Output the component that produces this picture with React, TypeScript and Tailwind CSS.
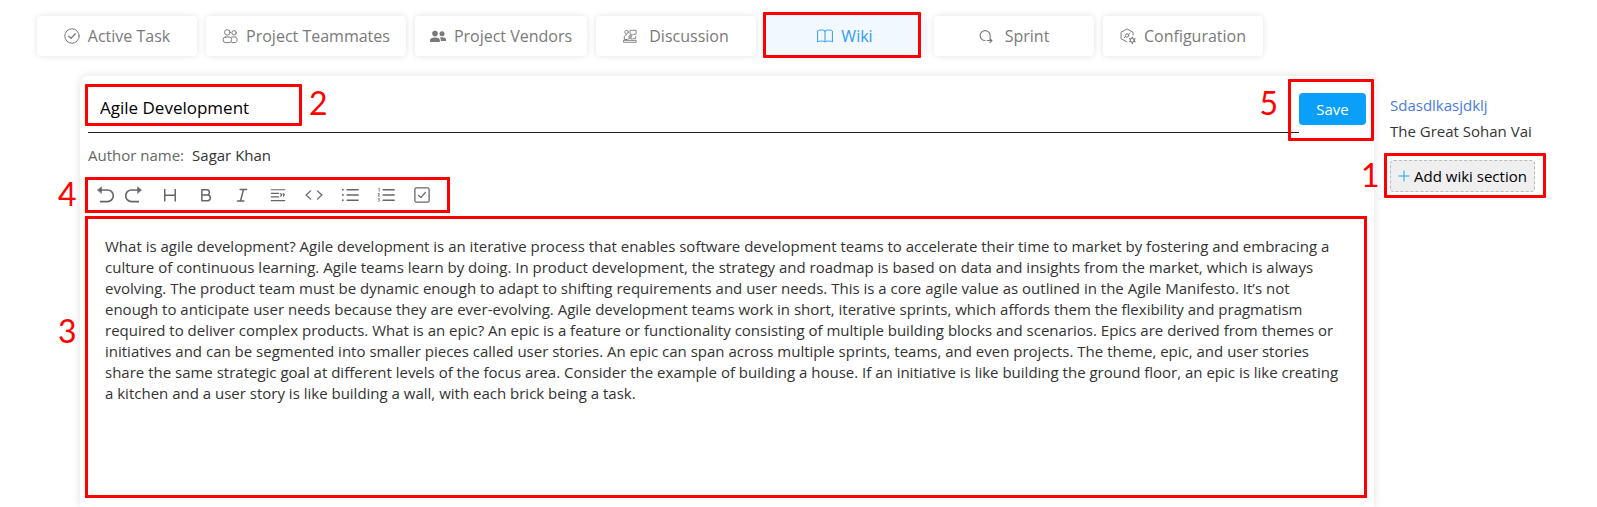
import { ReactNode } from "react"

const tabs = [
    { name: "Active Task", width: "w-40", icon: <CheckCircleIcon /> },
    { name: "Project Teammates", width: "w-50", icon: <TeamIcon /> },
    { name: "Project Vendors", width: "w-[172px]", icon: <VendorsIcon /> },
    { name: "Discussion", width: "w-40", icon: <DiscussionIcon /> },
    { name: "Wiki", width: "w-40", icon: <BookIcon />, active: true },
    { name: "Sprint", width: "w-40", icon: <SprintIcon /> },
    { name: "Configuration", width: "w-40", icon: <ConfigIcon /> },
]

const content = [
    "What is agile development? Agile development is an iterative process that enables software development teams to accelerate their time to market by fostering and embracing a",
    "culture of continuous learning. Agile teams learn by doing. In product development, the strategy and roadmap is based on data and insights from the market, which is always",
    "evolving. The product team must be dynamic enough to adapt to shifting requirements and user needs. This is a core agile value as outlined in the Agile Manifesto. It’s not",
    "enough to anticipate user needs because they are ever-evolving. Agile development teams work in short, iterative sprints, which affords them the flexibility and pragmatism",
    "required to deliver complex products. What is an epic? An epic is a feature or functionality consisting of multiple building blocks and scenarios. Epics are derived from themes or",
    "initiatives and can be segmented into smaller pieces called user stories. An epic can span across multiple sprints, teams, and even projects. The theme, epic, and user stories",
    "share the same strategic goal at different levels of the focus area. Consider the example of building a house. If an initiative is like building the ground floor, an epic is like creating",
    "a kitchen and a user story is like building a wall, with each brick being a task.",
].join("\n")

function Icon({ children, size = "size-4", box = "0 0 16 16" }: { children: ReactNode; size?: string; box?: string }) {
    return (
        <svg className={`${size} shrink-0`} viewBox={box} fill="none" stroke="currentColor" strokeLinecap="round" strokeLinejoin="round" aria-hidden="true">
            {children}
        </svg>
    )
}

function CheckCircleIcon() {
    return (
        <Icon>
            <circle cx="8" cy="8" r="7.2" />
            <path d="M4.8 8.2l2.3 2.2 4.2-4.6" strokeWidth="1.3" />
        </Icon>
    )
}

function TeamIcon() {
    return (
        <Icon>
            <circle cx="5.3" cy="4.4" r="2.8" />
            <circle cx="12" cy="4.8" r="2.2" />
            <rect x="1.2" y="9" width="8.4" height="5.6" rx="2.4" />
            <path d="M9.8 9h3c1.4 0 2.2 1 2.2 2.2v1.2c0 1.2-.8 2.2-2 2.2H10" />
        </Icon>
    )
}

function VendorsIcon() {
    return (
        <Icon>
            <g fill="currentColor" stroke="none">
                <circle cx="5" cy="5.6" r="2.8" />
                <circle cx="12" cy="5.8" r="2.5" />
                <path d="M0 14v-1.800C0 10.200 1.600 9.400 5 9.400s4.800.8 4.800 2.800V14z" />
                <path d="M10.800 13v-1.200c0-.9-.4-1.700-1-2.300.7-.2 1.400-.3 2.200-.3 2.700 0 4 .8 4 2.400V13z" />
            </g>
        </Icon>
    )
}

function DiscussionIcon() {
    return (
        <Icon size="mr-1 size-3.5">
            <circle cx="4" cy="3.500" r="2" />
            <path d="M8.500 1.500H15v4.500h-3.500L10 7.500V6H8.500z" />
            <path d="M1.500 9.500c0-2 1-3 2.500-3M8 7.500v0M14.500 8.500v2.500h-3M1.500 9.500V12h3" />
            <circle cx="8" cy="9" r="1.400" />
            <path d="M5.500 13c0-1.600 1-2.500 2.500-2.500s2.500.9 2.500 2.500M1 13h14v2.200H1z" />
        </Icon>
    )
}

function BookIcon() {
    return (
        <Icon>
            <path d="M8 3v11M8 3.200C7.500 2.300 6.300 2 4.500 2S1.200 2.300.6 3v11c1-.7 2-.9 3.900-.9s3 .2 3.500.9c.5-.7 1.600-.9 3.500-.9s2.900.2 3.900.9V3c-.6-.7-2.100-1-3.900-1S8.500 2.300 8 3.200z" />
        </Icon>
    )
}

function SprintIcon() {
    return (
        <Icon size="mr-1 size-3.5">
            <path d="M7 13.200A5.700 5.700 0 1 1 12.700 7.500v5.700M9.500 13.200h5M12.500 11l2.300 2.200-2.300 2.200" strokeWidth="1.300" />
        </Icon>
    )
}

function ConfigIcon() {
    return (
        <Icon>
            <path d="M6.800 13.800L1 10.800V4.300L7 .9l6 3.400v2.500M4.300 9.800l1-1.200M8.800 6.200l1-1.200" />
            <circle cx="7" cy="7.500" r="1.700" />
            <circle cx="12.300" cy="12.300" r="2" />
            <path d="M12.300 9.200v1M12.300 14.400v1M9.600 10.800l.9.500M14.100 13.300l.9.500M9.600 13.800l.9-.5M14.100 11.300l.9-.5" strokeWidth="1.300" />
        </Icon>
    )
}

const tools = [
    { name: "Heading", path: <path d="M5 4v16.500M19 4v16.500M5 12.200h14" strokeWidth="2" strokeLinecap="butt" /> },
    { name: "Bold", path: <path d="M6.500 5h6.500a3.500 3.500 0 0 1 0 7H6.500zM6.500 12h7.500a3.800 3.800 0 0 1 0 7.600H6.500z" strokeWidth="2" /> },
    { name: "Italic", path: <path d="M9.500 4.500h8.500M6 20h8.500M14 4.500l-4 15.500" strokeWidth="2" /> },
    { name: "Quote", path: <path d="M3 5h18M3 9.800h10M3 14.600h10M3 19.400h18M15.500 10.200l1.500 1-1.300 2.300M19 10.200l1.500 1-1.300 2.300" strokeWidth="1.600" /> },
    { name: "Code", path: <path d="M7.500 6.500L1.500 12l6 5.500M16.500 6.500l6 5.500-6 5.500" strokeWidth="1.700" /> },
    { name: "Bulleted list", path: <><path d="M8 5h15M8 12h15M8 19h15" strokeWidth="1.700" /><path d="M2.500 5h.01M2.500 12h.01M2.500 19h.01" strokeWidth="2.500" /></> },
    { name: "Numbered list", path: <><path d="M8 5h15M8 12h15M8 19h15" strokeWidth="1.700" /><path d="M2 3.500l1-.5v4M1.500 10.300h2l-2 3.200h2.300M1.500 17h2l-1.200 1.500c1.800 0 1.500 2.500-.8 2" /></> },
    { name: "Checklist", path: <><rect x="2.500" y="2.500" width="19" height="19" rx="2" strokeWidth="1.700" /><path d="M7.500 12.500l3 3L16.500 8.500" strokeWidth="1.700" /></> },
]

// red frame drawn on top of its relative parent
function Mark({ place }: { place: string }) {
    return <span className={`pointer-events-none absolute z-10 rounded-[1px] border-3 border-[#ff0000] ${place}`} />
}

function Step({ n, place }: { n: number; place: string }) {
    return <span className={`pointer-events-none absolute z-10 font-[Lato,sans-serif] text-[32px] leading-8 text-[#ff0000] ${place}`}>{n}</span>
}

function Tabs() {
    return (
        <nav className="flex gap-[9px] pt-4 pl-[37px]">
            {tabs.map((tab) => (
                <button
                    key={tab.name}
                    type="button"
                    className={`relative flex h-10 shrink-0 items-center justify-center gap-2 rounded-sm text-base shadow-[0_0_6px_rgba(0,0,0,0.12)] ${tab.width} ${tab.active ? "bg-[#f1f8ff] text-[#2f9bf5]" : "bg-white text-[#7a7a7a]"}`}
                >
                    {tab.icon}
                    {tab.name}
                    {tab.active && <Mark place="-top-1 -left-0.5 h-[46px] w-[158px]" />}
                </button>
            ))}
        </nav>
    )
}

function Toolbar() {
    return (
        <div className="relative -ml-[3px] flex h-9 w-[365px] items-center border-3 border-[#ff0000] pl-2 text-[#666]">
            <button type="button" aria-label="Undo" className="mr-2">
                <Icon size="size-5" box="0 0 20 20">
                    <path d="M4 5h7.500a5.800 5.800 0 0 1 0 11.600H4" strokeWidth="1.700" strokeLinecap="butt" />
                    <path d="M1.500 5l4-3.200v6.400z" fill="currentColor" strokeWidth=".5" />
                </Icon>
            </button>
            <button type="button" aria-label="Redo" className="mr-2">
                <Icon size="size-5" box="0 0 20 20">
                    <path d="M15 5H7.500a5.800 5.800 0 0 0 0 11.600H15" strokeWidth="1.700" strokeLinecap="butt" />
                    <path d="M17.500 5l-4-3.200v6.400z" fill="currentColor" strokeWidth=".5" />
                </Icon>
            </button>
            {tools.map((tool) => (
                <button key={tool.name} type="button" aria-label={tool.name} className="flex w-9 justify-center">
                    <Icon size="size-[18px]" box="0 0 24 24">{tool.path}</Icon>
                </button>
            ))}
            <Step n={4} place="-left-[30px] -top-0.5" />
        </div>
    )
}

export default function App() {
    return (
        <div className="flex min-h-screen flex-col overflow-hidden bg-white font-['Open_Sans',sans-serif] text-[15px] text-[#333]">
            <Tabs />
            <div className="mt-5 flex flex-1 gap-4 pl-20">
                <main className="min-w-0 flex-1 rounded-t-lg px-2 pt-2 pb-[9px] shadow-[0_0_10px_rgba(0,0,0,0.12)]">
                    <div className="relative flex items-start">
                        <input
                            aria-label="Wiki title"
                            defaultValue="Agile Development"
                            className="h-[49px] min-w-0 flex-1 border-b border-[#222] px-3 pb-0.5 text-[17px] text-black outline-none"
                        />
                        <button type="button" className="mt-[9px] h-8 w-[67px] rounded-sm bg-[#0a9ffb] font-medium text-white">
                            Save
                        </button>
                        <Mark place="-left-[3px] top-0 h-[42px] w-[217px]" />
                        <Step n={2} place="left-[221px] top-[3px]" />
                        <Mark place="-right-2 -top-[5px] h-[62px] w-[86px]" />
                        <Step n={5} place="right-[88px] top-[3px]" />
                    </div>
                    <p className="mt-3 flex gap-2 leading-5">
                        <span className="text-[#666]">Author name:</span>
                        <span>Sagar Khan</span>
                    </p>
                    <div className="mt-3">
                        <Toolbar />
                    </div>
                    <div className="relative mt-[3px] -mr-px -ml-[3px]">
                        <textarea
                            aria-label="Wiki content"
                            defaultValue={content}
                            className="block h-[282px] w-full resize-none overflow-hidden border-3 border-[#ff0000] pt-[17px] pl-[17px] leading-[21px] whitespace-pre outline-none"
                        />
                        <Step n={3} place="-left-[27px] top-[99px]" />
                    </div>
                </main>
                <aside className="relative w-[207px] shrink-0 pt-[19px]">
                    <a href="#section" className="block leading-5 text-[#4a7bdc]">Sdasdlkasjdklj</a>
                    <a href="#sohan" className="mt-1.5 block leading-5">The Great Sohan Vai</a>
                    <button type="button" className="mt-[19px] flex h-8 w-[145px] items-center justify-center gap-1 rounded-sm border border-dashed border-[#bbb] bg-[#efefef] text-black">
                        <svg className="size-3 text-[#18a8ee]" viewBox="0 0 12 12" stroke="currentColor" aria-hidden="true">
                            <path d="M6 .5v11M.5 6h11" />
                        </svg>
                        Add wiki section
                    </button>
                    <Mark place="-left-1.5 top-[77px] h-[45px] w-[162px]" />
                    <Step n={1} place="-left-[29px] top-[83px]" />
                </aside>
            </div>
        </div>
    )
}
